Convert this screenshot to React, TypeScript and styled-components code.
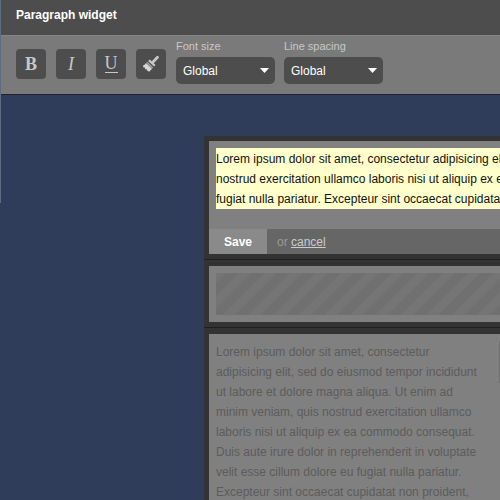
import React from "react";
import styled, { createGlobalStyle } from "styled-components";

const GlobalStyle = createGlobalStyle`
  * { box-sizing: border-box; }
  html, body { margin: 0; background: #303d5a; }
  body { overflow: hidden; }
  body, button, select {
    font-family: "Liberation Sans", Arial, sans-serif;
    font-size: 12px;
  }
  p { margin: 0; }
`;

const Page = styled.main`
  height: 100vh;
  padding-left: 1px;
  overflow: hidden;
  background: linear-gradient(#5d6c7e, #5d6c7e) left top / 1px 203px no-repeat #303d5a;
`;

const Header = styled.header`
  height: 35px;
  padding: 0 15px;
  background: #4d4d4d;
`;

const Title = styled.h1`
  margin: 0;
  font-size: 12px;
  line-height: 30px;
  color: #fff;
`;

const Toolbar = styled.div`
  display: flex;
  align-items: flex-start;
  height: 60px;
  padding: 0 15px;
  background: #7a7a7a;
  border-top: 1px solid #858585;
  border-bottom: 1px solid #1b2332;
`;

const ToolGroup = styled.div`
  display: flex;
  gap: 10px;
  padding: 13px 10px 0 0;
`;

const ToolButton = styled.button`
  display: grid;
  place-items: center;
  width: 30px;
  height: 30px;
  padding: 0;
  border: 0;
  border-radius: 4px;
  background: #4d4d4d;
  color: #c8c8c8;
  font: 18px/30px "Liberation Serif", "Times New Roman", serif;

  u {
    text-decoration: none;
    border-bottom: 1px solid;
    line-height: 17px;
  }
`;

const Fields = styled.div`
  display: flex;
  gap: 9px;
`;

const Field = styled.label`
  display: grid;
  font-size: 11px;
  line-height: 21px;
  color: #c8c8c8;
`;

const SelectBox = styled.span`
  display: grid;
  align-items: center;

  > * { grid-area: 1 / 1; }
  svg { justify-self: end; margin-right: 6px; pointer-events: none; }
`;

const Select = styled.select`
  appearance: none;
  width: 99px;
  height: 27px;
  padding: 0 7px;
  border: 0;
  border-radius: 5px;
  background: #4d4d4d;
  color: #fff;
`;

const Editor = styled.div`
  width: 870px;
  margin: 41px 0 0 203px;
  background: #333;
`;

const Block = styled.section`
  padding: 5px;
  border-bottom: 1px solid #1f1f1f;

  & + & { padding-top: 6px; }
`;

const Surface = styled.div`
  padding: 7px;
  background: #808080;
`;

const Selected = styled.p`
  margin-bottom: 13px;
  padding-top: 1px;
  background: #ffffcc;
  color: #111;
  line-height: 20px;
`;

const Actions = styled.div`
  display: flex;
  align-items: center;
  gap: 10px;
  height: 25px;
  background: #666;
  color: #999;
`;

const Save = styled.button`
  width: 58px;
  height: 25px;
  padding: 0;
  border: 0;
  background: #8a8a8a;
  color: #fff;
  font-weight: bold;
`;

const Cancel = styled.a`
  color: #ccc;
`;

const Divider = styled.div`
  height: 42px;
  background: repeating-linear-gradient(-45deg, #707070 0 8px, #757575 10px 17px, #707070 18px);
`;

const Columns = styled.div`
  display: grid;
  grid-template-columns: 268px 1fr;
  gap: 15px;
  color: #5c5c5c;
  line-height: 20px;

  p { padding-top: 1px; }
`;

const ImageSlot = styled.div`
  height: 42px;
  background: #6f6f6f;
`;

const lorem =
  "Lorem ipsum dolor sit amet, consectetur adipisicing elit, sed do eiusmod tempor incididunt ut labore et dolore magna aliqua. Ut enim ad minim veniam, quis nostrud exercitation ullamco laboris nisi ut aliquip ex ea commodo consequat. Duis aute irure dolor in reprehenderit in voluptate velit esse cillum dolore eu fugiat nulla pariatur. Excepteur sint occaecat cupidatat non proident, sunt in culpa qui officia deserunt mollit anim id est laborum.";

function BrushIcon() {
  return (
    <svg width="18" height="18" viewBox="0 0 18 18" aria-hidden="true">
      <path d="M10.4 7.6L15.5 2.3" stroke="#c8c8c8" strokeWidth="2.8" strokeLinecap="round" />
      <path d="M7.8 4.4L13.6 10.1L12 11.6L6.2 5.9Z" fill="#c8c8c8" />
      <path d="M5.4 6.7L11.2 12.4L10.2 13.4L4.4 7.7Z" fill="#a4a4a4" />
      <path d="M4 8L10 13.8L6.9 17L6 15.4L5.2 16L4.4 14.1L3.4 14.4L2.8 12.6L1.6 12.6L.8 10.8Q2.8 10 4 8Z" fill="#d6d6d6" />
    </svg>
  );
}

function GlobalSelect({ label }: { label: string }) {
  return (
    <Field>
      {label}
      <SelectBox>
        <Select defaultValue="Global">
          <option>Global</option>
        </Select>
        <svg width="9" height="5" viewBox="0 0 9 5" aria-hidden="true">
          <path d="M0 0H9L4.5 5Z" fill="#fff" />
        </svg>
      </SelectBox>
    </Field>
  );
}

export default function App() {
  return (
    <Page>
      <GlobalStyle />
      <Header>
        <Title>Paragraph widget</Title>
      </Header>
      <Toolbar>
        <ToolGroup>
          <ToolButton aria-label="Bold"><b>B</b></ToolButton>
          <ToolButton aria-label="Italic"><i>I</i></ToolButton>
          <ToolButton aria-label="Underline"><u>U</u></ToolButton>
          <ToolButton aria-label="Clear formatting"><BrushIcon /></ToolButton>
        </ToolGroup>
        <Fields>
          <GlobalSelect label="Font size" />
          <GlobalSelect label="Line spacing" />
        </Fields>
      </Toolbar>
      <Editor>
        <Block>
          <Surface>
            <Selected>{lorem}</Selected>
          </Surface>
          <Actions>
            <Save>Save</Save>
            <span>or <Cancel href="#cancel">cancel</Cancel></span>
          </Actions>
        </Block>
        <Block>
          <Surface><Divider /></Surface>
        </Block>
        <Block>
          <Surface>
            <Columns>
              <p>{lorem}</p>
              <ImageSlot />
            </Columns>
          </Surface>
        </Block>
      </Editor>
    </Page>
  );
}
